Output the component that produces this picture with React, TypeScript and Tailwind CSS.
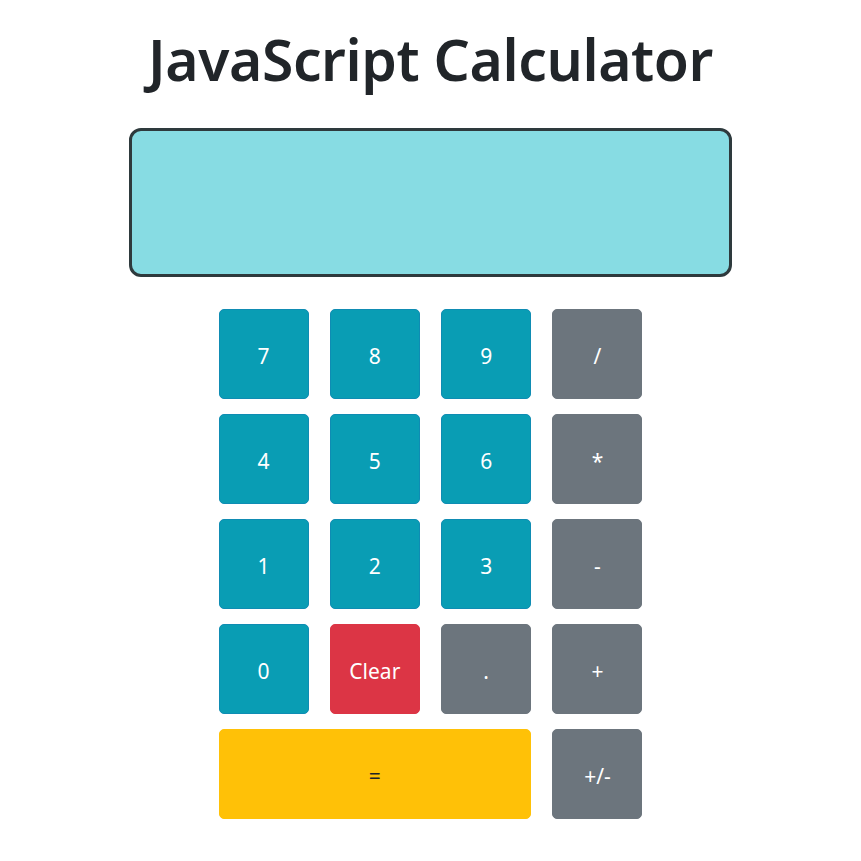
const keys: { label: string; kind: 'num' | 'op' | 'clear' | 'eq'; wide?: boolean }[] = [
  { label: '7', kind: 'num' },
  { label: '8', kind: 'num' },
  { label: '9', kind: 'num' },
  { label: '/', kind: 'op' },
  { label: '4', kind: 'num' },
  { label: '5', kind: 'num' },
  { label: '6', kind: 'num' },
  { label: '*', kind: 'op' },
  { label: '1', kind: 'num' },
  { label: '2', kind: 'num' },
  { label: '3', kind: 'num' },
  { label: '-', kind: 'op' },
  { label: '0', kind: 'num' },
  { label: 'Clear', kind: 'clear' },
  { label: '.', kind: 'op' },
  { label: '+', kind: 'op' },
  { label: '=', kind: 'eq', wide: true },
  { label: '+/-', kind: 'op' },
];

const kindClass = {
  num: 'bg-[#099db4] border-[#0f8cb3] text-white',
  op: 'bg-[#6c757d] border-[#6c757d] text-white',
  clear: 'bg-[#dc3545] border-[#dc3545] text-white',
  eq: 'bg-[#ffc107] border-[#ffc107] text-[#212529]',
};

export default function App() {
  return (
    <main className="min-h-screen bg-white flex flex-col items-center font-['Noto_Sans',sans-serif] text-[#212529]">
      <h1 className="mt-[25px] text-[57px] leading-[1.2] font-semibold tracking-[-0.4px]">JavaScript Calculator</h1>

      <div className="mt-[35px] w-[603px] h-[149px] bg-[#87dce3] border-[3px] border-[#2e3a3d] rounded-[12px]" />

      <div className="mt-[32px] w-[424px] grid grid-cols-[90px_90px_90px_90px] justify-between gap-y-[15px]">
        {keys.map((k) => (
          <button
            key={k.label}
            className={`h-[90px] rounded-[5px] border pt-[4px] text-[21px] flex items-center justify-center ${kindClass[k.kind]} ${
              k.wide ? 'col-span-3' : ''
            }`}
          >
            {k.label}
          </button>
        ))}
      </div>
    </main>
  );
}
